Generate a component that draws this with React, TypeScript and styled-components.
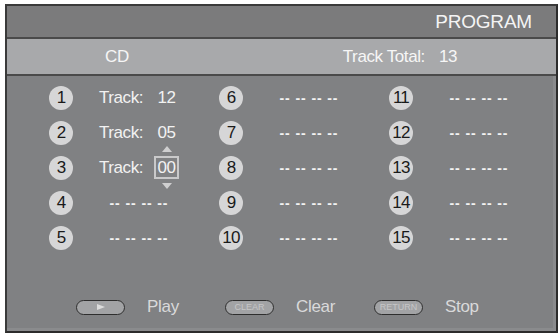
import React from "react";
import styled, { createGlobalStyle } from "styled-components";

const GlobalStyle = createGlobalStyle`
  html, body {
    margin: 0;
    padding: 0;
    background: #ffffff;
  }
  body {
    font-family: "Liberation Sans", Arial, sans-serif;
  }
`;

type Slot = {
  no: number;
  track?: string;
  editing?: boolean;
};

const slots: Slot[] = [
  { no: 1, track: "12" },
  { no: 2, track: "05" },
  { no: 3, track: "00", editing: true },
  { no: 4 },
  { no: 5 },
  { no: 6 },
  { no: 7 },
  { no: 8 },
  { no: 9 },
  { no: 10 },
  { no: 11 },
  { no: 12 },
  { no: 13 },
  { no: 14 },
  { no: 15 },
];

const ProgramSlot = ({ slot }: { slot: Slot }) => {
  return (
    <Cell>
      <Badge>{slot.no}</Badge>
      <Entry>
        {slot.track ? (
          <>
            <Label>Track:</Label>
            {slot.editing ? (
              <EditBox>
                <ArrowUp />
                {slot.track}
                <ArrowDown />
              </EditBox>
            ) : (
              <Value>{slot.track}</Value>
            )}
          </>
        ) : (
          <Dashes>-- -- -- --</Dashes>
        )}
      </Entry>
    </Cell>
  );
};

const App = () => {
  return (
    <>
      <GlobalStyle />
      <Page>
        <Panel>
          <TitleBar>PROGRAM</TitleBar>
          <InfoBar>
            <Disc>CD</Disc>
            <TotalLabel>Track Total:</TotalLabel>
            <TotalValue>13</TotalValue>
          </InfoBar>
          <Body>
            <SlotGrid>
              {slots.map((s) => (
                <ProgramSlot key={s.no} slot={s} />
              ))}
            </SlotGrid>
            <Footer>
              <Hint>
                <Key>
                  <PlayGlyph />
                </Key>
                <HintText>Play</HintText>
              </Hint>
              <Hint>
                <Key>CLEAR</Key>
                <HintText>Clear</HintText>
              </Hint>
              <Hint>
                <Key>RETURN</Key>
                <HintText>Stop</HintText>
              </Hint>
            </Footer>
          </Body>
        </Panel>
      </Page>
    </>
  );
};

export default App;

const Page = styled.div`
  width: 559px;
  height: 335px;
  padding: 4px 1px 2px 5px;
  box-sizing: border-box;
`;

const Panel = styled.div`
  width: 100%;
  height: 100%;
  box-sizing: border-box;
  display: flex;
  flex-direction: column;
  border-top: 2px solid #3a3a3a;
  border-left: 2px solid #3a3a3a;
  border-right: 2px solid #2c2c2c;
  border-bottom: 2px solid #2c2c2c;
  background: #808183;
  box-shadow: inset -3px -3px 0 #8a8b8d;
`;

const TitleBar = styled.div`
  height: 31px;
  display: flex;
  align-items: center;
  justify-content: flex-end;
  padding-right: 24px;
  background: #7b7b7c;
  border-bottom: 2px solid #4a4a4a;
  color: #f4f4f4;
  font-size: 19px;
  letter-spacing: -0.2px;
`;

const InfoBar = styled.div`
  height: 35px;
  display: flex;
  align-items: center;
  background: #a8a9ab;
  border-bottom: 2px solid #4a4a4a;
  color: #f6f6f6;
  font-size: 17px;
  letter-spacing: -0.4px;
`;

const Disc = styled.span`
  margin-left: 98px;
`;

const TotalLabel = styled.span`
  margin-left: 214px;
`;

const TotalValue = styled.span`
  margin-left: 14px;
`;

const Body = styled.div`
  flex: 1;
  display: flex;
  flex-direction: column;
  padding: 4px 0 0 42px;
`;

const SlotGrid = styled.div`
  display: grid;
  grid-auto-flow: column;
  grid-template-rows: repeat(5, 35px);
  grid-template-columns: repeat(3, 170px);
`;

const Cell = styled.div`
  display: flex;
  align-items: center;
`;

const Badge = styled.div`
  width: 24px;
  height: 24px;
  border-radius: 50%;
  background: #d6d6d7;
  color: #1a1a1a;
  font-size: 17px;
  letter-spacing: -0.8px;
  display: flex;
  align-items: center;
  justify-content: center;
  flex-shrink: 0;
`;

const Entry = styled.div`
  width: 100px;
  margin-left: 16px;
  display: flex;
  align-items: center;
  justify-content: center;
  color: #f2f2f2;
  font-size: 17px;
  letter-spacing: -0.4px;
`;

const Label = styled.span`
  margin-right: 11px;
`;

const Value = styled.span`
  width: 25px;
  text-align: center;
`;

const EditBox = styled.span`
  position: relative;
  width: 21px;
  height: 19px;
  display: flex;
  align-items: center;
  justify-content: center;
  border: 2px solid #c9c9ca;
`;

const ArrowUp = styled.span`
  position: absolute;
  left: 50%;
  top: -12px;
  transform: translateX(-50%);
  width: 0;
  height: 0;
  border-left: 5px solid transparent;
  border-right: 5px solid transparent;
  border-bottom: 6px solid #cfcfd0;
`;

const ArrowDown = styled.span`
  position: absolute;
  left: 50%;
  bottom: -12px;
  transform: translateX(-50%);
  width: 0;
  height: 0;
  border-left: 5px solid transparent;
  border-right: 5px solid transparent;
  border-top: 6px solid #cfcfd0;
`;

const Dashes = styled.span`
  font-size: 14px;
  font-weight: bold;
  letter-spacing: 0.9px;
  white-space: pre;
`;

const Footer = styled.div`
  display: flex;
  align-items: center;
  margin-top: 42px;
  padding-left: 27px;
`;

const Hint = styled.div`
  width: 149px;
  display: flex;
  align-items: center;
`;

const Key = styled.div`
  width: 47px;
  height: 13px;
  border: 1px solid #2e2e2e;
  border-radius: 8px;
  background: #a2a3a5;
  color: #c6c6c7;
  font-size: 9px;
  display: flex;
  align-items: center;
  justify-content: center;
`;

const PlayGlyph = styled.span`
  width: 0;
  height: 0;
  border-top: 3px solid transparent;
  border-bottom: 3px solid transparent;
  border-left: 8px solid #dcdcdc;
`;

const HintText = styled.span`
  margin-left: 22px;
  color: #d9d9da;
  font-size: 17px;
  letter-spacing: -0.3px;
`;
